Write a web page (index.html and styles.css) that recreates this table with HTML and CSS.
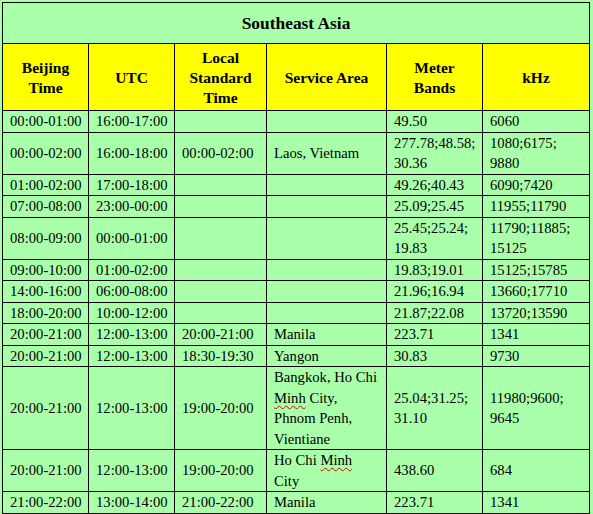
FILE: index.html
```html
<!DOCTYPE html>
<html>
<head>
<meta charset="utf-8">
<link rel="stylesheet" href="styles.css">
</head>
<body>
<table class="sched">
  <colgroup>
    <col class="c1"><col class="c2"><col class="c3"><col class="c4"><col class="c5"><col class="c6">
  </colgroup>
  <tr class="title-row"><td colspan="6" class="title">Southeast Asia</td></tr>
  <tr class="head-row">
    <th>Beijing<br>Time</th>
    <th>UTC</th>
    <th>Local<br>Standard<br>Time</th>
    <th>Service Area</th>
    <th>Meter<br>Bands</th>
    <th>kHz</th>
  </tr>
  <tr><td>00:00-01:00</td><td>16:00-17:00</td><td></td><td></td><td>49.50</td><td>6060</td></tr>
  <tr><td>00:00-02:00</td><td>16:00-18:00</td><td>00:00-02:00</td><td>Laos, Vietnam</td><td>277.78;48.58;<br>30.36</td><td>1080;6175;<br>9880</td></tr>
  <tr><td>01:00-02:00</td><td>17:00-18:00</td><td></td><td></td><td>49.26;40.43</td><td>6090;7420</td></tr>
  <tr><td>07:00-08:00</td><td>23:00-00:00</td><td></td><td></td><td>25.09;25.45</td><td>11955;11790</td></tr>
  <tr><td>08:00-09:00</td><td>00:00-01:00</td><td></td><td></td><td>25.45;25.24;<br>19.83</td><td>11790;11885;<br>15125</td></tr>
  <tr><td>09:00-10:00</td><td>01:00-02:00</td><td></td><td></td><td>19.83;19.01</td><td>15125;15785</td></tr>
  <tr><td>14:00-16:00</td><td>06:00-08:00</td><td></td><td></td><td>21.96;16.94</td><td>13660;17710</td></tr>
  <tr><td>18:00-20:00</td><td>10:00-12:00</td><td></td><td></td><td>21.87;22.08</td><td>13720;13590</td></tr>
  <tr><td>20:00-21:00</td><td>12:00-13:00</td><td>20:00-21:00</td><td>Manila</td><td>223.71</td><td>1341</td></tr>
  <tr><td>20:00-21:00</td><td>12:00-13:00</td><td>18:30-19:30</td><td>Yangon</td><td>30.83</td><td>9730</td></tr>
  <tr><td>20:00-21:00</td><td>12:00-13:00</td><td>19:00-20:00</td><td>Bangkok, Ho Chi<br><span class="spell">Minh</span> City,<br>Phnom Penh,<br>Vientiane</td><td>25.04;31.25;<br>31.10</td><td>11980;9600;<br>9645</td></tr>
  <tr><td>20:00-21:00</td><td>12:00-13:00</td><td>19:00-20:00</td><td>Ho Chi <span class="spell">Minh</span><br>City</td><td>438.60</td><td>684</td></tr>
  <tr><td>21:00-22:00</td><td>13:00-14:00</td><td>21:00-22:00</td><td>Manila</td><td>223.71</td><td>1341</td></tr>
</table>
</body>
</html>
```
FILE: styles.css
```css
html, body {
  margin: 0;
  padding: 0;
  background: #aaffaa;
}
body {
  padding: 2px 0 0 2px;
  font-family: "Liberation Serif", "Times New Roman", serif;
  color: #000;
}
.sched {
  border-collapse: collapse;
  table-layout: fixed;
  width: 588px;
}
.c1 { width: 86px; }
.c2 { width: 86px; }
.c3 { width: 92px; }
.c4 { width: 120px; }
.c5 { width: 96px; }
.c6 { width: 107px; }
.sched td, .sched th {
  border: 1px solid #000;
  padding: 0 7px;
  vertical-align: middle;
}
.sched td {
  font-size: 14.67px;
  line-height: 20.5px;
  text-align: left;
  white-space: nowrap;
  overflow: visible;
}
.sched td.title {
  height: 40px;
  padding: 0;
  font-size: 17.4px;
  font-weight: bold;
  text-align: center;
  line-height: 20px;
}
.head-row th {
  background: #ffff00;
  font-size: 15.5px;
  font-weight: bold;
  line-height: 20px;
  height: 64px;
  padding: 2px 4px 0;
  text-align: center;
}
.spell {
  text-decoration: underline wavy #e00000;
  text-decoration-thickness: 1px;
  text-underline-offset: 2px;
}
```
